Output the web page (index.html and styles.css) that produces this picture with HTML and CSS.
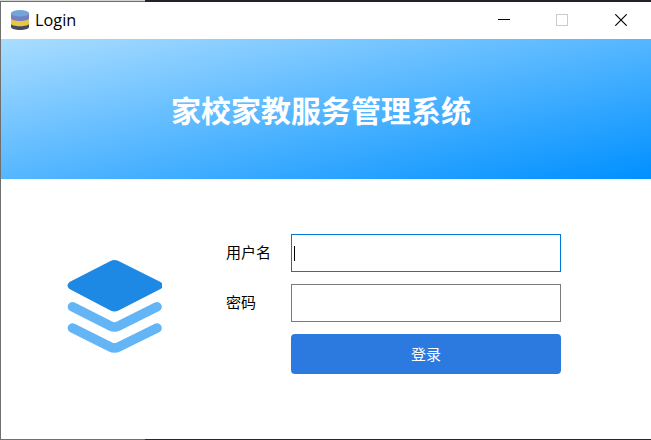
FILE: index.html
```
<!DOCTYPE html>
<html lang="zh-CN">
<head>
<meta charset="utf-8">
<title>Login</title>
<link rel="stylesheet" href="styles.css">
</head>
<body>
<div class="window">
  <header class="titlebar">
    <svg class="app-icon" width="20" height="22" viewBox="0 0 20 22">
      <path d="M1 14v4c0 4 18 4 18 0v-4z" fill="#444c5c"/>
      <path d="M1 9v5.500c0 3.600 18 3.600 18 0V9z" fill="#e9c646"/>
      <path d="M1 4v5.200c0 3.600 18 3.600 18 0V4z" fill="#7181c3"/>
      <ellipse cx="10" cy="4.200" rx="9" ry="3.200" fill="#73a5db"/>
    </svg>
    <span class="caption">Login</span>
    <div class="controls">
      <svg width="12" height="12" viewBox="0 0 12 12" shape-rendering="crispEdges"><path d="M0 5.500h12" stroke="#000"/></svg>
      <svg width="12" height="12" viewBox="0 0 12 12" shape-rendering="crispEdges"><path d="M.5.500h11v11H.5z" fill="none" stroke="#ccc"/></svg>
      <svg class="close" width="12" height="12" viewBox="0 0 12 12"><path d="M.3.300l11.400 11.400M11.700.300L.3 11.700" stroke="#000" stroke-width="1.150"/></svg>
    </div>
  </header>
  <div class="banner"><h1>家校家教服务管理系统</h1></div>
  <main class="content">
    <svg class="logo" width="96" height="96" viewBox="0 0 96 96">
      <path d="M6.500 47.800L44.500 67q4 2 8 0L91 47.800M6.500 69L44.500 88q4 2 8 0L91 69" fill="none" stroke="#64b5f6" stroke-width="9.600" stroke-linecap="round" stroke-linejoin="round"/>
      <path d="M44.500 2q4-2 8 0L94.500 23q5 3.500 0 7L52.500 51.500q-4 2-8 0L3.500 30q-4-3.500 0-7z" fill="#1e88e5"/>
    </svg>
    <form class="form">
      <label for="user">用户名</label>
      <div class="field focused" id="user"><span class="caret"></span></div>
      <label for="pass">密码</label>
      <div class="field" id="pass"></div>
      <button class="submit" type="button">登录</button>
    </form>
  </main>
</div>
</body>
</html>
```
FILE: styles.css
```
* { box-sizing: border-box; }
body {
  margin: 0;
  width: 651px;
  height: 440px;
  padding: 2px 0 1px 1px;
  overflow: hidden;
  font: 15px "Noto Sans CJK SC", sans-serif;
  color: #000;
  background:
    linear-gradient(90deg, #d4d4d4 145px, #22222a 145px) top / 100% 1px no-repeat,
    linear-gradient(90deg, #6f6f6f 145px, #22222a 145px) 0 1px / 100% 1px no-repeat,
    linear-gradient(90deg, #6f6f6f 145px, #28282b 145px) bottom / 100% 1px no-repeat,
    #6f6f6f;
}
.window { height: 437px; background: #fff; }
.titlebar {
  height: 37px;
  display: flex;
  align-items: center;
  padding: 0 24px 0 9px;
}
.app-icon { margin-top: -1px; }
.caption {
  margin: -1px auto 0 5px;
  font: 16.3px "Open Sans", sans-serif;
}
.controls { display: flex; gap: 46px; margin-top: -1px; }
.controls svg { display: block; }
.close { margin-left: 1px; }
.banner {
  height: 140px;
  display: flex;
  align-items: center;
  justify-content: center;
  padding: 0 10px 1px 0;
  background: linear-gradient(to bottom right, #aaddff, #0090ff);
}
h1 {
  margin: 0;
  font-size: 30px;
  line-height: 40px;
  font-weight: 700;
  color: #fff;
}
.content { display: flex; align-items: flex-start; padding: 55px 90px 0 65px; }
.logo { display: block; margin-top: 25px; }
.form {
  margin-left: 64px;
  display: grid;
  grid-template-columns: 65px 270px;
  grid-template-rows: 38px 38px 40px;
  row-gap: 12px;
}
label { line-height: 36px; }
.field { border: 1px solid #7a7a7a; background: #fff; padding: 11px 2px; }
.focused { border-color: #0078d7; }
.caret { display: block; width: 1px; height: 15px; background: #000; }
.submit {
  grid-column: 2;
  border: 0;
  border-radius: 4px;
  padding: 0 0 2px;
  background: #2c7ae0;
  color: #fff;
  font: inherit;
}
```
